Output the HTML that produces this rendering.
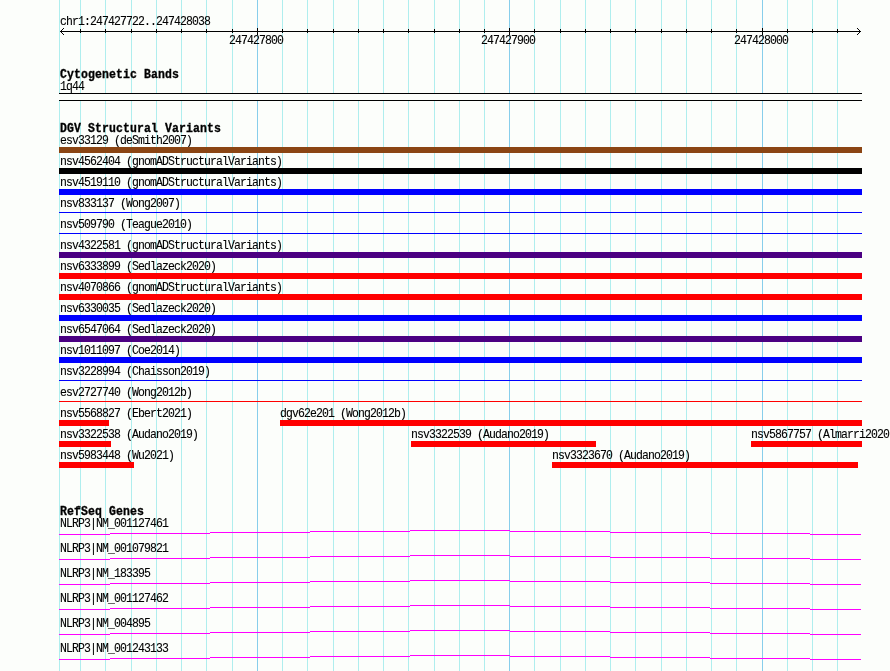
<!DOCTYPE html>
<html><head><meta charset="utf-8"><style>
html,body{margin:0;padding:0}
body{width:890px;height:671px;overflow:hidden;position:relative;background:#fcfefb}
i{position:absolute;display:block;box-sizing:content-box}
p{position:absolute;margin:0;white-space:pre;line-height:13px;color:#000;font-family:"Liberation Mono",monospace;will-change:transform;-webkit-text-stroke:0.1px #000}
p.b{-webkit-text-stroke:0.3px #000}
p.t{font-size:11.5px;letter-spacing:-0.900px;transform:scaleY(1.143);transform-origin:0 10px}
p.b{font-size:11.5px;font-weight:bold;letter-spacing:0.100px;transform:scaleY(1.143);transform-origin:0 10px}
</style></head><body>
<i style="left:80px;top:0px;width:1px;height:671px;background:#afeeee"></i>
<i style="left:105px;top:0px;width:1px;height:671px;background:#afeeee"></i>
<i style="left:131px;top:0px;width:1px;height:671px;background:#afeeee"></i>
<i style="left:156px;top:0px;width:1px;height:671px;background:#afeeee"></i>
<i style="left:181px;top:0px;width:1px;height:671px;background:#afeeee"></i>
<i style="left:206px;top:0px;width:1px;height:671px;background:#afeeee"></i>
<i style="left:232px;top:0px;width:1px;height:671px;background:#afeeee"></i>
<i style="left:257px;top:0px;width:1px;height:671px;background:#87ceeb"></i>
<i style="left:282px;top:0px;width:1px;height:671px;background:#afeeee"></i>
<i style="left:307px;top:0px;width:1px;height:671px;background:#afeeee"></i>
<i style="left:333px;top:0px;width:1px;height:671px;background:#afeeee"></i>
<i style="left:358px;top:0px;width:1px;height:671px;background:#afeeee"></i>
<i style="left:383px;top:0px;width:1px;height:671px;background:#afeeee"></i>
<i style="left:408px;top:0px;width:1px;height:671px;background:#afeeee"></i>
<i style="left:434px;top:0px;width:1px;height:671px;background:#afeeee"></i>
<i style="left:459px;top:0px;width:1px;height:671px;background:#afeeee"></i>
<i style="left:484px;top:0px;width:1px;height:671px;background:#afeeee"></i>
<i style="left:509px;top:0px;width:1px;height:671px;background:#87ceeb"></i>
<i style="left:534px;top:0px;width:1px;height:671px;background:#afeeee"></i>
<i style="left:560px;top:0px;width:1px;height:671px;background:#afeeee"></i>
<i style="left:585px;top:0px;width:1px;height:671px;background:#afeeee"></i>
<i style="left:610px;top:0px;width:1px;height:671px;background:#afeeee"></i>
<i style="left:635px;top:0px;width:1px;height:671px;background:#afeeee"></i>
<i style="left:661px;top:0px;width:1px;height:671px;background:#afeeee"></i>
<i style="left:686px;top:0px;width:1px;height:671px;background:#afeeee"></i>
<i style="left:711px;top:0px;width:1px;height:671px;background:#afeeee"></i>
<i style="left:736px;top:0px;width:1px;height:671px;background:#afeeee"></i>
<i style="left:762px;top:0px;width:1px;height:671px;background:#87ceeb"></i>
<i style="left:787px;top:0px;width:1px;height:671px;background:#afeeee"></i>
<i style="left:812px;top:0px;width:1px;height:671px;background:#afeeee"></i>
<i style="left:837px;top:0px;width:1px;height:671px;background:#afeeee"></i>
<i style="left:59px;top:0px;width:1px;height:671px;background:#afeeee"></i>
<i style="left:60px;top:31px;width:801px;height:1px;background:#000"></i>
<i style="left:80px;top:29px;width:1px;height:4px;background:#000"></i>
<i style="left:105px;top:29px;width:1px;height:4px;background:#000"></i>
<i style="left:131px;top:29px;width:1px;height:4px;background:#000"></i>
<i style="left:156px;top:29px;width:1px;height:4px;background:#000"></i>
<i style="left:181px;top:29px;width:1px;height:4px;background:#000"></i>
<i style="left:206px;top:29px;width:1px;height:4px;background:#000"></i>
<i style="left:232px;top:29px;width:1px;height:4px;background:#000"></i>
<i style="left:257px;top:28px;width:1px;height:7px;background:#000"></i>
<p class="t" style="left:228.5px;top:34px">247427800</p>
<i style="left:282px;top:29px;width:1px;height:4px;background:#000"></i>
<i style="left:307px;top:29px;width:1px;height:4px;background:#000"></i>
<i style="left:333px;top:29px;width:1px;height:4px;background:#000"></i>
<i style="left:358px;top:29px;width:1px;height:4px;background:#000"></i>
<i style="left:383px;top:29px;width:1px;height:4px;background:#000"></i>
<i style="left:408px;top:29px;width:1px;height:4px;background:#000"></i>
<i style="left:434px;top:29px;width:1px;height:4px;background:#000"></i>
<i style="left:459px;top:29px;width:1px;height:4px;background:#000"></i>
<i style="left:484px;top:29px;width:1px;height:4px;background:#000"></i>
<i style="left:509px;top:28px;width:1px;height:7px;background:#000"></i>
<p class="t" style="left:480.5px;top:34px">247427900</p>
<i style="left:534px;top:29px;width:1px;height:4px;background:#000"></i>
<i style="left:560px;top:29px;width:1px;height:4px;background:#000"></i>
<i style="left:585px;top:29px;width:1px;height:4px;background:#000"></i>
<i style="left:610px;top:29px;width:1px;height:4px;background:#000"></i>
<i style="left:635px;top:29px;width:1px;height:4px;background:#000"></i>
<i style="left:661px;top:29px;width:1px;height:4px;background:#000"></i>
<i style="left:686px;top:29px;width:1px;height:4px;background:#000"></i>
<i style="left:711px;top:29px;width:1px;height:4px;background:#000"></i>
<i style="left:736px;top:29px;width:1px;height:4px;background:#000"></i>
<i style="left:762px;top:28px;width:1px;height:7px;background:#000"></i>
<p class="t" style="left:733.5px;top:34px">247428000</p>
<i style="left:787px;top:29px;width:1px;height:4px;background:#000"></i>
<i style="left:812px;top:29px;width:1px;height:4px;background:#000"></i>
<i style="left:837px;top:29px;width:1px;height:4px;background:#000"></i>
<i style="left:61px;top:30px;width:1px;height:1px;background:#000"></i>
<i style="left:61px;top:32px;width:1px;height:1px;background:#000"></i>
<i style="left:859px;top:30px;width:1px;height:1px;background:#000"></i>
<i style="left:859px;top:32px;width:1px;height:1px;background:#000"></i>
<i style="left:62px;top:29px;width:1px;height:1px;background:#000"></i>
<i style="left:62px;top:33px;width:1px;height:1px;background:#000"></i>
<i style="left:858px;top:29px;width:1px;height:1px;background:#000"></i>
<i style="left:858px;top:33px;width:1px;height:1px;background:#000"></i>
<i style="left:63px;top:28px;width:1px;height:1px;background:#000"></i>
<i style="left:63px;top:34px;width:1px;height:1px;background:#000"></i>
<i style="left:857px;top:28px;width:1px;height:1px;background:#000"></i>
<i style="left:857px;top:34px;width:1px;height:1px;background:#000"></i>
<p class="t" style="left:59.5px;top:15px">chr1:247427722..247428038</p>
<p class="b" style="left:60px;top:68px">Cytogenetic Bands</p>
<p class="t" style="left:59.5px;top:80px">1q44</p>
<i style="left:59px;top:93px;width:803px;height:6px;border-top:1px solid #000;border-bottom:1px solid #000;background:#fcfefb"></i>
<p class="b" style="left:60px;top:122px">DGV Structural Variants</p>
<p class="t" style="left:59.5px;top:134px">esv33129 (deSmith2007)</p>
<i style="left:59px;top:147px;width:803px;height:6px;background:#8b4513"></i>
<p class="t" style="left:59.5px;top:155px">nsv4562404 (gnomADStructuralVariants)</p>
<i style="left:59px;top:168px;width:803px;height:6px;background:#000000"></i>
<p class="t" style="left:59.5px;top:176px">nsv4519110 (gnomADStructuralVariants)</p>
<i style="left:59px;top:189px;width:803px;height:6px;background:#0000ff"></i>
<p class="t" style="left:59.5px;top:197px">nsv833137 (Wong2007)</p>
<i style="left:59px;top:212px;width:803px;height:1px;background:#0000ff"></i>
<p class="t" style="left:59.5px;top:218px">nsv509790 (Teague2010)</p>
<i style="left:59px;top:233px;width:803px;height:1px;background:#0000ff"></i>
<p class="t" style="left:59.5px;top:239px">nsv4322581 (gnomADStructuralVariants)</p>
<i style="left:59px;top:252px;width:803px;height:6px;background:#4b0082"></i>
<p class="t" style="left:59.5px;top:260px">nsv6333899 (Sedlazeck2020)</p>
<i style="left:59px;top:273px;width:803px;height:6px;background:#ff0000"></i>
<p class="t" style="left:59.5px;top:281px">nsv4070866 (gnomADStructuralVariants)</p>
<i style="left:59px;top:294px;width:803px;height:6px;background:#ff0000"></i>
<p class="t" style="left:59.5px;top:302px">nsv6330035 (Sedlazeck2020)</p>
<i style="left:59px;top:315px;width:803px;height:6px;background:#0000ff"></i>
<p class="t" style="left:59.5px;top:323px">nsv6547064 (Sedlazeck2020)</p>
<i style="left:59px;top:336px;width:803px;height:6px;background:#4b0082"></i>
<p class="t" style="left:59.5px;top:344px">nsv1011097 (Coe2014)</p>
<i style="left:59px;top:357px;width:803px;height:6px;background:#0000ff"></i>
<p class="t" style="left:59.5px;top:365px">nsv3228994 (Chaisson2019)</p>
<i style="left:59px;top:380px;width:803px;height:1px;background:#0000ff"></i>
<p class="t" style="left:59.5px;top:386px">esv2727740 (Wong2012b)</p>
<i style="left:59px;top:401px;width:803px;height:1px;background:#ff0000"></i>
<p class="t" style="left:59.5px;top:407px">nsv5568827 (Ebert2021)</p>
<i style="left:59px;top:420px;width:50px;height:6px;background:#ff0000"></i>
<p class="t" style="left:279.5px;top:407px">dgv62e201 (Wong2012b)</p>
<i style="left:280px;top:420px;width:582px;height:6px;background:#ff0000"></i>
<p class="t" style="left:59.5px;top:428px">nsv3322538 (Audano2019)</p>
<i style="left:59px;top:441px;width:52px;height:6px;background:#ff0000"></i>
<p class="t" style="left:410.5px;top:428px">nsv3322539 (Audano2019)</p>
<i style="left:411px;top:441px;width:185px;height:6px;background:#ff0000"></i>
<p class="t" style="left:750.5px;top:428px">nsv5867757 (Almarri2020</p>
<i style="left:751px;top:441px;width:111px;height:6px;background:#ff0000"></i>
<p class="t" style="left:59.5px;top:449px">nsv5983448 (Wu2021)</p>
<i style="left:59px;top:462px;width:75px;height:6px;background:#ff0000"></i>
<p class="t" style="left:551.5px;top:449px">nsv3323670 (Audano2019)</p>
<i style="left:552px;top:462px;width:306px;height:6px;background:#ff0000"></i>
<p class="b" style="left:60px;top:505px">RefSeq Genes</p>
<p class="t" style="left:59.5px;top:517px">NLRP3|NM_001127461</p>
<i style="left:59px;top:534px;width:51px;height:1px;background:#ff00ff"></i>
<i style="left:110px;top:533px;width:100px;height:1px;background:#ff00ff"></i>
<i style="left:210px;top:532px;width:100px;height:1px;background:#ff00ff"></i>
<i style="left:310px;top:531px;width:100px;height:1px;background:#ff00ff"></i>
<i style="left:410px;top:530px;width:100px;height:1px;background:#ff00ff"></i>
<i style="left:510px;top:531px;width:100px;height:1px;background:#ff00ff"></i>
<i style="left:610px;top:532px;width:100px;height:1px;background:#ff00ff"></i>
<i style="left:710px;top:533px;width:100px;height:1px;background:#ff00ff"></i>
<i style="left:810px;top:534px;width:51px;height:1px;background:#ff00ff"></i>
<p class="t" style="left:59.5px;top:542px">NLRP3|NM_001079821</p>
<i style="left:59px;top:559px;width:51px;height:1px;background:#ff00ff"></i>
<i style="left:110px;top:558px;width:100px;height:1px;background:#ff00ff"></i>
<i style="left:210px;top:557px;width:100px;height:1px;background:#ff00ff"></i>
<i style="left:310px;top:556px;width:100px;height:1px;background:#ff00ff"></i>
<i style="left:410px;top:555px;width:100px;height:1px;background:#ff00ff"></i>
<i style="left:510px;top:556px;width:100px;height:1px;background:#ff00ff"></i>
<i style="left:610px;top:557px;width:100px;height:1px;background:#ff00ff"></i>
<i style="left:710px;top:558px;width:100px;height:1px;background:#ff00ff"></i>
<i style="left:810px;top:559px;width:51px;height:1px;background:#ff00ff"></i>
<p class="t" style="left:59.5px;top:567px">NLRP3|NM_183395</p>
<i style="left:59px;top:584px;width:51px;height:1px;background:#ff00ff"></i>
<i style="left:110px;top:583px;width:100px;height:1px;background:#ff00ff"></i>
<i style="left:210px;top:582px;width:100px;height:1px;background:#ff00ff"></i>
<i style="left:310px;top:581px;width:100px;height:1px;background:#ff00ff"></i>
<i style="left:410px;top:580px;width:100px;height:1px;background:#ff00ff"></i>
<i style="left:510px;top:581px;width:100px;height:1px;background:#ff00ff"></i>
<i style="left:610px;top:582px;width:100px;height:1px;background:#ff00ff"></i>
<i style="left:710px;top:583px;width:100px;height:1px;background:#ff00ff"></i>
<i style="left:810px;top:584px;width:51px;height:1px;background:#ff00ff"></i>
<p class="t" style="left:59.5px;top:592px">NLRP3|NM_001127462</p>
<i style="left:59px;top:609px;width:51px;height:1px;background:#ff00ff"></i>
<i style="left:110px;top:608px;width:100px;height:1px;background:#ff00ff"></i>
<i style="left:210px;top:607px;width:100px;height:1px;background:#ff00ff"></i>
<i style="left:310px;top:606px;width:100px;height:1px;background:#ff00ff"></i>
<i style="left:410px;top:605px;width:100px;height:1px;background:#ff00ff"></i>
<i style="left:510px;top:606px;width:100px;height:1px;background:#ff00ff"></i>
<i style="left:610px;top:607px;width:100px;height:1px;background:#ff00ff"></i>
<i style="left:710px;top:608px;width:100px;height:1px;background:#ff00ff"></i>
<i style="left:810px;top:609px;width:51px;height:1px;background:#ff00ff"></i>
<p class="t" style="left:59.5px;top:617px">NLRP3|NM_004895</p>
<i style="left:59px;top:634px;width:51px;height:1px;background:#ff00ff"></i>
<i style="left:110px;top:633px;width:100px;height:1px;background:#ff00ff"></i>
<i style="left:210px;top:632px;width:100px;height:1px;background:#ff00ff"></i>
<i style="left:310px;top:631px;width:100px;height:1px;background:#ff00ff"></i>
<i style="left:410px;top:630px;width:100px;height:1px;background:#ff00ff"></i>
<i style="left:510px;top:631px;width:100px;height:1px;background:#ff00ff"></i>
<i style="left:610px;top:632px;width:100px;height:1px;background:#ff00ff"></i>
<i style="left:710px;top:633px;width:100px;height:1px;background:#ff00ff"></i>
<i style="left:810px;top:634px;width:51px;height:1px;background:#ff00ff"></i>
<p class="t" style="left:59.5px;top:642px">NLRP3|NM_001243133</p>
<i style="left:59px;top:659px;width:51px;height:1px;background:#ff00ff"></i>
<i style="left:110px;top:658px;width:100px;height:1px;background:#ff00ff"></i>
<i style="left:210px;top:657px;width:100px;height:1px;background:#ff00ff"></i>
<i style="left:310px;top:656px;width:100px;height:1px;background:#ff00ff"></i>
<i style="left:410px;top:655px;width:100px;height:1px;background:#ff00ff"></i>
<i style="left:510px;top:656px;width:100px;height:1px;background:#ff00ff"></i>
<i style="left:610px;top:657px;width:100px;height:1px;background:#ff00ff"></i>
<i style="left:710px;top:658px;width:100px;height:1px;background:#ff00ff"></i>
<i style="left:810px;top:659px;width:51px;height:1px;background:#ff00ff"></i>
</body></html>
